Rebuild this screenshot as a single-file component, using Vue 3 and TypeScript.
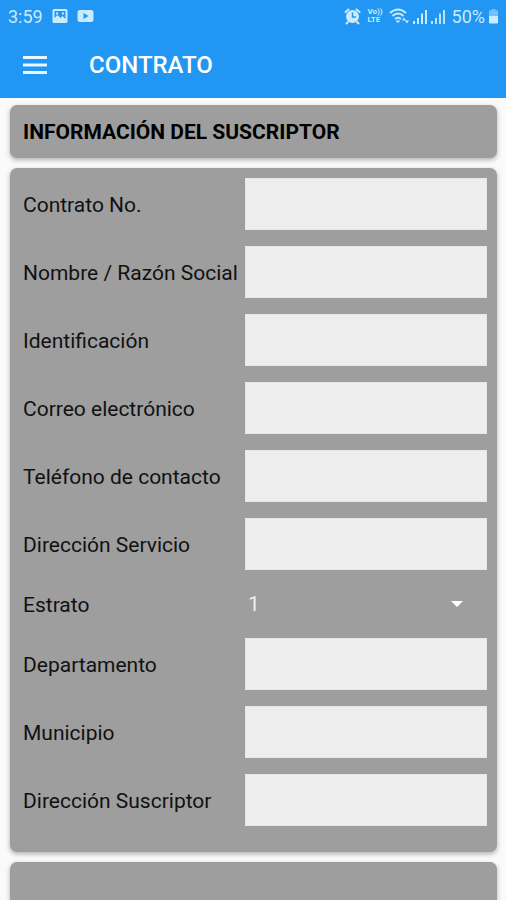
<script setup lang="ts">
import { reactive, ref } from 'vue'

interface Field {
  id: string
  label: string
  kind: 'text' | 'email' | 'tel' | 'select'
}

const fields: Field[] = [
  { id: 'contrato', label: 'Contrato No.', kind: 'text' },
  { id: 'nombre', label: 'Nombre / Razón Social', kind: 'text' },
  { id: 'identificacion', label: 'Identificación', kind: 'text' },
  { id: 'correo', label: 'Correo electrónico', kind: 'email' },
  { id: 'telefono', label: 'Teléfono de contacto', kind: 'tel' },
  { id: 'servicio', label: 'Dirección Servicio', kind: 'text' },
  { id: 'estrato', label: 'Estrato', kind: 'select' },
  { id: 'departamento', label: 'Departamento', kind: 'text' },
  { id: 'municipio', label: 'Municipio', kind: 'text' },
  { id: 'suscriptor', label: 'Dirección Suscriptor', kind: 'text' },
]

const values = reactive<Record<string, string>>({})
const estrato = ref('1')
const estratos = ['1', '2', '3', '4', '5', '6']
</script>

<template>
  <div class="page">
    <header class="header">
      <div class="status">
        <div class="group left">
          <span class="clock">3:59</span>
          <svg class="icon" width="16" height="16" viewBox="0 0 16 16">
            <path fill="currentColor" fill-rule="evenodd" d="M2 1h12a1.500 1.500 0 0 1 1.500 1.500v11a1.500 1.500 0 0 1-1.500 1.500H2a1.500 1.500 0 0 1-1.500-1.500v-11A1.500 1.500 0 0 1 2 1ZM2.500 3v7l3-3 3 3 2-2 3 3V3ZM4 4.500h2v2H4ZM10 4.500h2v2h-2Z" />
          </svg>
          <svg class="icon" width="17" height="14" viewBox="0 0 17 14">
            <path fill="currentColor" fill-rule="evenodd" d="M3 1h11a2.500 2.500 0 0 1 2.500 2.500v7A2.500 2.500 0 0 1 14 13H3a2.500 2.500 0 0 1-2.500-2.500v-7A2.500 2.500 0 0 1 3 1ZM6.500 4v6l5-3Z" />
          </svg>
        </div>
        <div class="group right">
          <svg class="icon" width="17" height="17" viewBox="0 0 17 17">
            <path fill="none" stroke="currentColor" stroke-width="2" stroke-linecap="round" d="M1.500 4l3-2.500M15.500 4l-3-2.500M4 14l-1.500 1.500M13 14l1.500 1.500" />
            <circle cx="8.500" cy="8.500" r="6.500" fill="currentColor" />
            <path fill="none" stroke="#2196f3" stroke-width="1.500" d="M8.500 4.500v4.500h3.500" />
          </svg>
          <span class="volte"><span>Vo))</span><span>LTE</span></span>
          <div class="group signals">
            <svg class="icon" width="21" height="17" viewBox="0 0 21 17">
              <path fill="none" stroke="currentColor" stroke-width="2" d="M1 5q8-7 16 0M3.500 8q5.500-5 11 0M6 11q3-2.500 6 0" />
              <path fill="currentColor" d="M9 15l-2.500-2.500h5ZM13 12.500l2-3 2 3ZM16 12.500h4l-2 3Z" />
            </svg>
            <svg v-for="n in 2" :key="n" class="icon" width="15" height="17" viewBox="0 0 15 17">
              <path fill="currentColor" :opacity="n === 1 ? 1 : 0.9" d="M0 13h2v3H0ZM4 10h2v6H4ZM8 5.500h2V16H8ZM12 2h2v14h-2Z" />
            </svg>
          </div>
          <div class="group battery">
            <span>50%</span>
            <svg class="icon" width="11" height="16" viewBox="0 0 11 16">
              <path fill="currentColor" opacity=".5" d="M3.500 1h4v1.500H10V8H1V2.500h2.500Z" />
              <path fill="currentColor" d="M1 8h9v6.500a1 1 0 0 1-1 1H2a1 1 0 0 1-1-1Z" />
            </svg>
          </div>
        </div>
      </div>
      <div class="toolbar">
        <button class="menu" type="button" aria-label="Menú">
          <svg width="24" height="18" viewBox="0 0 24 18">
            <path fill="currentColor" d="M0 0h24v3H0ZM0 7.500h24v3H0ZM0 15h24v3H0Z" />
          </svg>
        </button>
        <h1>CONTRATO</h1>
      </div>
    </header>

    <main class="content">
      <section class="card heading">
        <h2>INFORMACIÓN DEL SUSCRIPTOR</h2>
      </section>

      <form class="card form" @submit.prevent>
        <div v-for="field in fields" :key="field.id" class="row">
          <label :for="field.id">{{ field.label }}</label>
          <div v-if="field.kind === 'select'" class="picker">
            <select :id="field.id" v-model="estrato">
              <option v-for="option in estratos" :key="option" :value="option">{{ option }}</option>
            </select>
            <svg class="caret" width="12" height="6" viewBox="0 0 12 6">
              <path fill="currentColor" d="M0 0h12L6 6Z" />
            </svg>
          </div>
          <input v-else :id="field.id" v-model="values[field.id]" :type="field.kind" />
        </div>
      </form>

      <section class="card next"></section>
    </main>
  </div>
</template>

<style>
body {
  margin: 0;
  background: #fafafa;
}
</style>

<style scoped>
.page {
  display: flex;
  flex-direction: column;
  min-height: 100vh;
  font-family: Roboto, "Liberation Sans", sans-serif;
  color: #111;
}

.header {
  background: #2196f3;
  color: #fff;
}

.status {
  display: flex;
  align-items: center;
  justify-content: space-between;
  height: 32px;
  padding: 0 7px 0 8px;
  color: #c9ebff;
  font-size: 18px;
}

.group {
  display: flex;
  align-items: center;
}

.left {
  gap: 9px;
}

.right {
  gap: 6px;
}

.signals,
.battery {
  gap: 3px;
}

.icon {
  flex: none;
}

.volte {
  display: flex;
  flex-direction: column;
  font-size: 8px;
  line-height: 8px;
  font-weight: 700;
}

.toolbar {
  display: flex;
  align-items: center;
  gap: 42px;
  height: 66px;
  padding: 0 23px;
}

.menu {
  display: flex;
  padding: 0;
  border: 0;
  background: none;
  color: #e8f6ff;
}

h1,
h2 {
  margin: 0;
  line-height: 28px;
}

h1 {
  font-size: 24px;
  font-weight: 500;
}

h2 {
  font-size: 21px;
  font-weight: 700;
  color: #000;
}

.content {
  flex: 1;
  display: flex;
  flex-direction: column;
  gap: 10px;
  padding: 7px 9px 0 10px;
}

.card {
  border-radius: 7px;
  background: #9e9e9e;
  box-shadow: 0 2px 5px rgba(0, 0, 0, 0.3);
}

.heading {
  padding: 13px 13px 12px;
}

.form {
  display: flex;
  flex-direction: column;
  gap: 16px;
  padding: 10px 10px 26px 13px;
}

.row {
  display: grid;
  grid-template-columns: 222px 1fr;
  align-items: center;
}

label {
  padding-top: 2px;
  font-size: 21px;
  line-height: 28px;
  white-space: nowrap;
}

input {
  box-sizing: border-box;
  width: 100%;
  height: 52px;
  padding: 0 8px;
  border: 1px solid #e6e6e6;
  border-radius: 0;
  background: #eee;
  color: #111;
  font: inherit;
  font-size: 21px;
}

.picker {
  display: grid;
  align-items: center;
}

select {
  grid-area: 1 / 1;
  appearance: none;
  width: 100%;
  height: 36px;
  padding: 0 3px;
  border: 0;
  background: none;
  color: #eee;
  font: inherit;
  font-size: 21px;
}

option {
  color: #111;
}

.caret {
  grid-area: 1 / 1;
  justify-self: end;
  margin-right: 24px;
  color: #fff;
  pointer-events: none;
}

.next {
  flex: 1;
  min-height: 38px;
  border-radius: 7px 7px 0 0;
}
</style>
